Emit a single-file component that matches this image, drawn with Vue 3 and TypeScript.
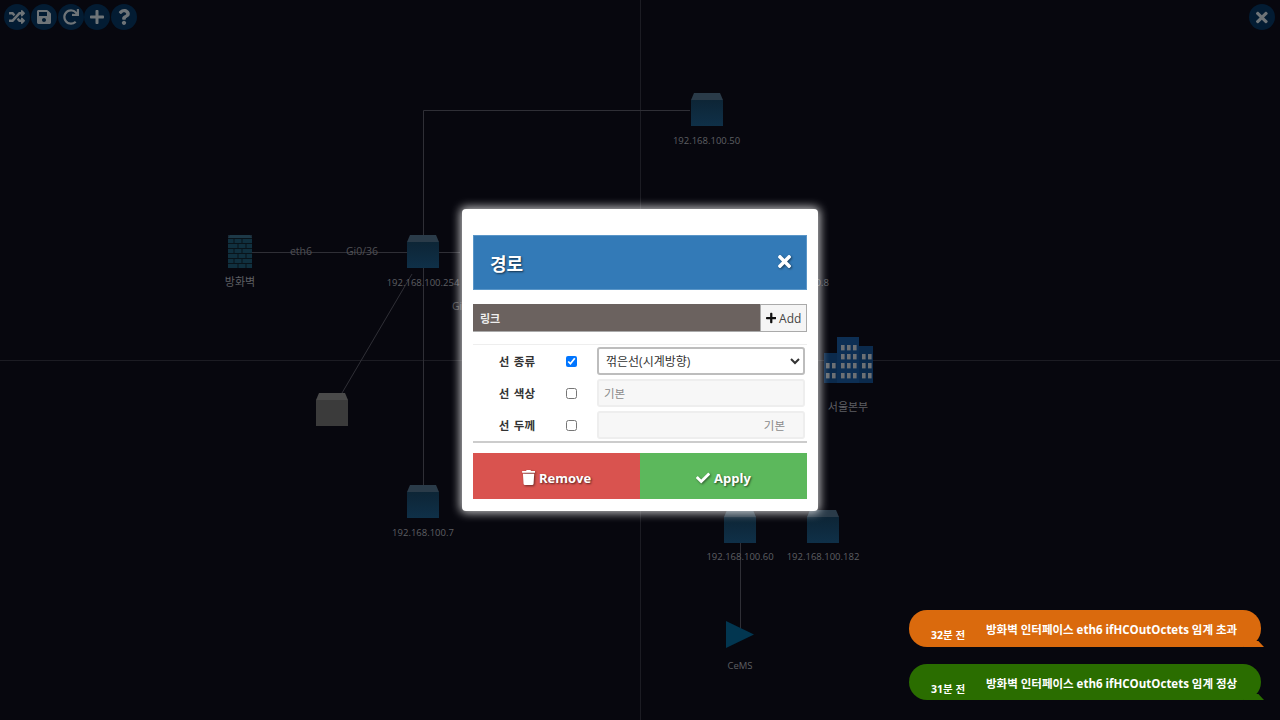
<script setup lang="ts">
interface NodeItem { label: string; x: number; y: number; kind: string; ly: number }
const nodes: NodeItem[] = [
  { label: '192.168.100.50', x: 706.5, y: 110, kind: 'cube', ly: 139.5 },
  { label: '방화벽', x: 240, y: 252, kind: 'wall', ly: 281 },
  { label: '192.168.100.254', x: 423, y: 252, kind: 'cube', ly: 281.5 },
  { label: '', x: 331.5, y: 410, kind: 'gray', ly: 0 },
  { label: '192.168.100.7', x: 423, y: 502, kind: 'cube', ly: 531.5 },
  { label: '192.168.100.60', x: 740, y: 527, kind: 'cube', ly: 555.5 },
  { label: '192.168.100.182', x: 823, y: 527, kind: 'cube', ly: 555.5 },
  { label: 'CeMS', x: 740, y: 635, kind: 'tri', ly: 664.5 },
  { label: '서울본부', x: 848, y: 360, kind: 'bld', ly: 405.5 },
  { label: '192.168.100.8', x: 798, y: 252, kind: 'none', ly: 281.5 }
]
const isKo = (s: string) => /[가-힣]/.test(s)
const tools = [
  { vb: '0 0 512 512', d: 'M504.971 359.029c9.373 9.373 9.373 24.569 0 33.941l-80 79.984c-15.01 15.01-40.971 4.49-40.971-16.971V416h-58.785a12.004 12.004 0 0 1-8.773-3.812l-70.556-75.596 53.333-57.143L352 336h32v-39.981c0-21.438 25.943-31.998 40.971-16.971l80 79.981zM12 176h84l52.781 56.551 53.333-57.143-70.556-75.596A11.999 11.999 0 0 0 122.785 96H12c-6.627 0-12 5.373-12 12v56c0 6.627 5.373 12 12 12zm372 0v39.984c0 21.46 25.961 31.98 40.971 16.971l80-79.984c9.373-9.373 9.373-24.569 0-33.941l-80-79.981C409.943 24.021 384 34.582 384 56.019V96h-58.785a12.004 12.004 0 0 0-8.773 3.812L96 336H12c-6.627 0-12 5.373-12 12v56c0 6.627 5.373 12 12 12h110.785c3.326 0 6.503-1.381 8.773-3.812L352 176h32z' },
  { vb: '0 0 448 512', d: 'M433.941 129.941l-83.882-83.882A48 48 0 0 0 316.118 32H48C21.49 32 0 53.49 0 80v352c0 26.51 21.49 48 48 48h352c26.51 0 48-21.49 48-48V163.882a48 48 0 0 0-14.059-33.941zM224 416c-35.346 0-64-28.654-64-64 0-35.346 28.654-64 64-64s64 28.654 64 64c0 35.346-28.654 64-64 64zm96-304.52V212c0 6.627-5.373 12-12 12H76c-6.627 0-12-5.373-12-12V108c0-6.627 5.373-12 12-12h228.52c3.183 0 6.235 1.264 8.485 3.515l3.48 3.48A11.996 11.996 0 0 1 320 111.48z' },
  { vb: '0 0 512 512', d: 'M500.33 0h-47.41a12 12 0 0 0-12 12.57l4 82.76A247.42 247.42 0 0 0 256 8C119.34 8 8.12 119.53 8 256.19 7.88 393.07 118.83 504 256 504a247.1 247.1 0 0 0 166.18-63.91 12 12 0 0 0 .48-17.43l-34-34a12 12 0 0 0-16.38-.55A176 176 0 1 1 402.1 157.8l-101.53-4.87a12 12 0 0 0-12.57 12v47.41a12 12 0 0 0 12 12h200.33a12 12 0 0 0 12-12V12a12 12 0 0 0-12-12z' },
  { vb: '0 0 448 512', d: 'M416 208H272V64c0-17.67-14.33-32-32-32h-32c-17.67 0-32 14.33-32 32v144H32c-17.67 0-32 14.33-32 32v32c0 17.67 14.33 32 32 32h144v144c0 17.67 14.33 32 32 32h32c17.67 0 32-14.33 32-32V304h144c17.67 0 32-14.33 32-32v-32c0-17.67-14.33-32-32-32z' },
  { vb: '0 0 384 512', d: 'M202.021 0C122.202 0 70.503 32.703 29.914 91.026c-7.363 10.58-5.093 25.086 5.178 32.874l43.138 32.709c10.373 7.865 25.132 6.026 33.253-4.148 25.049-31.381 43.63-49.449 82.757-49.449 30.764 0 68.816 19.799 68.816 49.631 0 22.552-18.617 34.134-48.993 51.164-35.423 19.86-82.299 44.576-82.299 106.405V320c0 13.255 10.745 24 24 24h72.471c13.255 0 24-10.745 24-24v-5.773c0-42.86 125.268-44.645 125.268-160.627C377.504 66.256 286.902 0 202.021 0zM192 373.459c-38.196 0-69.271 31.075-69.271 69.271 0 38.195 31.075 69.27 69.271 69.27s69.271-31.075 69.271-69.271-31.075-69.27-69.271-69.27z' }
]
const times = 'M242.72 256l100.07-100.07c12.28-12.28 12.28-32.19 0-44.48l-22.24-22.24c-12.28-12.28-32.19-12.28-44.48 0L176 189.28 75.93 89.21c-12.28-12.28-32.19-12.28-44.48 0L9.21 111.45c-12.28 12.28-12.28 32.19 0 44.48L109.28 256 9.21 356.07c-12.28 12.28-12.28 32.19 0 44.48l22.24 22.24c12.28 12.28 32.2 12.28 44.48 0L176 322.72l100.07 100.07c12.28 12.28 32.2 12.28 44.48 0l22.24-22.24c12.28-12.28 12.28-32.19 0-44.48L242.72 256z'
const plus = tools[3].d
const trash = 'M432 32H312l-9.4-18.7A24 24 0 0 0 281.1 0H166.8a23.72 23.72 0 0 0-21.4 13.3L136 32H16A16 16 0 0 0 0 48v32a16 16 0 0 0 16 16h416a16 16 0 0 0 16-16V48a16 16 0 0 0-16-16zM53.2 467a48 48 0 0 0 47.9 45h245.8a48 48 0 0 0 47.9-45L416 128H32z'
const check = 'M173.898 439.404l-166.4-166.4c-9.997-9.997-9.997-26.206 0-36.204l36.203-36.204c9.997-9.998 26.207-9.998 36.204 0L192 312.69 432.095 72.596c9.997-9.997 26.207-9.997 36.204 0l36.203 36.204c9.997 9.997 9.997 26.206 0 36.204l-294.4 294.401c-9.998 9.997-26.207 9.997-36.204-.001z'
const rows = [
  { label: '선 종류', on: true },
  { label: '선 색상', on: false },
  { label: '선 두께', on: false }
]
const toasts = [
  { time: '32분 전', msg: '방화벽 인터페이스 eth6 ifHCOutOctets 임계 초과', cls: 'orange' },
  { time: '31분 전', msg: '방화벽 인터페이스 eth6 ifHCOutOctets 임계 정상', cls: 'green' }
]
const windows: { x: number; y: number }[] = []
for (const x of [3, 9]) for (const y of [27, 37]) windows.push({ x, y })
for (const x of [18, 24, 30]) for (const y of [9, 18, 27, 37]) windows.push({ x, y })
for (const x of [39, 45]) for (const y of [18, 27, 37]) windows.push({ x, y })
</script>

<template>
  <div class="stage">
    <svg class="wires" width="1280" height="720" viewBox="0 0 1280 720">
      <path class="grid" d="M640.5 0V720M0 360.5H1280" />
      <path class="wire" d="M423.5 502V110.5H690M240 252.5H460M342 393L412 274M740.5 540V632" />
    </svg>

    <div
      v-for="n in nodes"
      :key="n.label + n.x"
      class="node"
      :style="{ left: n.x + 'px', top: n.y + 'px' }"
    >
      <svg v-if="n.kind === 'cube'" class="ico" width="34" height="34" viewBox="0 0 34 34">
        <defs>
          <linearGradient id="cubeBody" x1="0" y1="0" x2="0" y2="1">
            <stop offset="0" stop-color="#0d2536" />
            <stop offset="1" stop-color="#0f3048" />
          </linearGradient>
        </defs>
        <path d="M4 0H30L33 7H1Z" fill="#2a3b49" />
        <rect x="1" y="7" width="32" height="26" fill="url(#cubeBody)" />
      </svg>
      <svg v-else-if="n.kind === 'gray'" class="ico" width="34" height="34" viewBox="0 0 34 34">
        <path d="M4 0H30L33 7H1Z" fill="#4a4a4a" />
        <rect x="1" y="7" width="32" height="26" fill="#3b3b3b" />
      </svg>
      <svg v-else-if="n.kind === 'wall'" class="ico" width="24" height="34" viewBox="0 0 24 34">
        <path d="M2 0H22L24 3V33H0V3Z" fill="#10303f" />
        <path d="M0 0H24V3H0Z" fill="#26404f" opacity="0.6" />
        <path d="M0 3.5H24M0 8.5H24M0 13.5H24M0 18.5H24M0 23.5H24M0 28.5H24M6 4V8M14 4V8M10 9V13M18 9V13M6 14V18M14 14V18M10 19V23M18 19V23M6 24V28M14 24V28M10 29V33M18 29V33" stroke="#07090f" stroke-width="1" opacity="0.75" fill="none" />
      </svg>
      <svg v-else-if="n.kind === 'tri'" class="ico" width="28" height="28" viewBox="0 0 28 28">
        <path d="M0 0L28 13.5L0 27Z" fill="#023650" />
      </svg>
      <svg v-else-if="n.kind === 'bld'" class="ico" width="50" height="48" viewBox="0 0 50 48">
        <rect x="1" y="17" width="13" height="30" fill="#0b2a4c" />
        <rect x="14" y="1" width="22" height="46" fill="#0d2f54" />
        <rect x="36" y="10" width="14" height="37" fill="#0b2a4c" />
        <rect v-for="(w, i) in windows" :key="i" :x="w.x" :y="w.y" width="3.6" height="5.4" fill="#6c7074" />
      </svg>
      <span
        v-if="n.label"
        class="nlabel"
        :class="{ ko: isKo(n.label) }"
        :style="{ top: n.ly - n.y + 'px' }"
      >{{ n.label }}</span>
    </div>

    <span class="wl" style="left: 301px; top: 251px">eth6</span>
    <span class="wl" style="left: 362px; top: 251px">Gi0/36</span>
    <span class="wl" style="left: 465px; top: 306px">Gi0/1</span>

    <div class="toolbar">
      <button v-for="(t, i) in tools" :key="i" class="round" type="button">
        <svg height="16" :viewBox="t.vb" class="tico"><path :d="t.d" fill="currentColor" /></svg>
      </button>
    </div>
    <button class="round closeall" type="button">
      <svg height="17" viewBox="0 0 352 512" class="tico"><path :d="times" fill="currentColor" /></svg>
    </button>

    <div class="overlay">
      <div class="modal">
        <header class="mhead">
          <h2>경로</h2>
          <svg class="mclose" height="19" viewBox="0 0 352 512"><path :d="times" fill="#fff" /></svg>
        </header>
        <div class="bar">
          <span class="barlabel">링크</span>
          <button class="add" type="button">
            <svg height="12" viewBox="0 0 448 512"><path :d="plus" fill="#111" /></svg>
            Add
          </button>
        </div>
        <div class="form">
          <div v-for="(r, i) in rows" :key="r.label" class="frow">
            <span class="flabel">{{ r.label }}</span>
            <span class="fcheck"><input type="checkbox" :checked="r.on" /></span>
            <select v-if="i === 0" class="fsel">
              <option>꺾은선(시계방향)</option>
            </select>
            <input v-else class="finp" :class="{ right: i === 2 }" disabled placeholder="기본" />
          </div>
        </div>
        <div class="actions">
          <button class="act red" type="button">
            <svg height="15" viewBox="0 0 448 512"><path :d="trash" fill="#fff" /></svg>
            Remove
          </button>
          <button class="act grn" type="button">
            <svg height="14" viewBox="0 0 512 512"><path :d="check" fill="#fff" /></svg>
            Apply
          </button>
        </div>
      </div>
    </div>

    <div class="toasts">
      <div v-for="t in toasts" :key="t.time" class="toast" :class="t.cls">
        <span class="ttime">{{ t.time }}</span>
        <span class="tmsg">{{ t.msg }}</span>
      </div>
    </div>
  </div>
</template>

<style>
html, body { margin: 0; background: #07070e; }
</style>

<style scoped>
.stage {
  position: relative;
  width: 1280px;
  height: 720px;
  overflow: hidden;
  background: #07070e;
  font-family: "Open Sans", "Noto Sans CJK KR", sans-serif;
}
.wires { position: absolute; left: 0; top: 0; }
.grid { stroke: #1c1c23; stroke-width: 1; fill: none; }
.wire { stroke: #2f2f36; stroke-width: 1; fill: none; }
.node { position: absolute; width: 0; height: 0; }
.ico { position: absolute; transform: translate(-50%, -50%); display: block; }
.nlabel {
  position: absolute;
  transform: translate(-50%, -50%);
  white-space: nowrap;
  font-size: 9.5px;
  color: #5e5f63;
}
.nlabel.ko { font-size: 11px; }
.wl {
  position: absolute;
  transform: translate(-50%, -50%);
  font-size: 10.5px;
  color: #505055;
  white-space: nowrap;
}
.toolbar { position: absolute; left: 4px; top: 4px; display: flex; gap: 0.75px; }
.round {
  width: 26px;
  height: 26px;
  padding: 0;
  border: 0;
  border-radius: 50%;
  background: #031c33;
  color: #6e7478;
  display: flex;
  align-items: center;
  justify-content: center;
}
.closeall { position: absolute; left: 1249px; top: 4px; }
.tico { display: block; }
.overlay {
  position: absolute;
  inset: 0;
  display: flex;
  align-items: center;
  justify-content: center;
}
.modal {
  width: 334px;
  padding: 26px 11px 12px;
  background: #fff;
  border-radius: 4px;
  box-shadow: 0 0 10px 2px rgba(255, 255, 255, 0.75);
  display: flex;
  flex-direction: column;
}
.mhead {
  height: 55px;
  box-sizing: border-box;
  background: #337ab7;
  border: 1px solid #5a96c8;
  display: flex;
  align-items: center;
  justify-content: space-between;
  padding: 0 15px 0 16px;
}
.mhead h2 {
  margin: 0;
  font-size: 18px;
  font-weight: 700;
  color: #fff;
  text-shadow: 1px 1px 2px rgba(0, 0, 0, 0.6);
  font-family: "Noto Sans CJK KR", sans-serif;
}
.mclose { margin-bottom: 2px; filter: drop-shadow(1px 1px 1px rgba(0, 0, 0, 0.5)); }
.bar {
  margin-top: 14px;
  height: 28px;
  box-sizing: border-box;
  background: #6b625f;
  border-bottom: 1px solid #aaa;
  display: flex;
  align-items: stretch;
  justify-content: space-between;
}
.barlabel {
  align-self: center;
  margin-left: 7px;
  font-size: 11px;
  font-weight: 700;
  color: #eee;
  font-family: "Noto Sans CJK KR", sans-serif;
}
.add {
  width: 47px;
  height: 28px;
  padding: 0;
  box-sizing: border-box;
  border: 1px solid #aaa;
  background: #f5f5f5;
  font-family: inherit;
  font-size: 12px;
  color: #444;
  display: flex;
  align-items: center;
  justify-content: center;
  gap: 3px;
}
.form {
  margin-top: 12px;
  border-top: 1px solid #eee;
  border-bottom: 2px solid #ccc;
  padding: 2px 0;
  display: flex;
  flex-direction: column;
  gap: 4px;
}
.frow {
  display: grid;
  grid-template-columns: 73px 51px 208px;
  align-items: center;
  height: 28px;
}
.flabel {
  text-align: right;
  white-space: nowrap;
  margin-right: 11px;
  font-size: 11.5px;
  font-weight: 700;
  color: #333;
  word-spacing: 2px;
  font-family: "Noto Sans CJK KR", sans-serif;
}
.fcheck { display: flex; justify-content: center; }
.fcheck input { margin: 0; width: 11px; height: 11px; }
.fsel {
  width: 208px;
  height: 28px;
  box-sizing: border-box;
  border: 2px solid #bdbdbd;
  border-radius: 3px;
  background: #fff;
  padding: 0 3px;
  font-size: 12px;
  color: #333;
  font-family: "Open Sans", "Noto Sans CJK KR", sans-serif;
}
.finp {
  width: 208px;
  height: 28px;
  box-sizing: border-box;
  border: 2px solid #eeeeee;
  border-radius: 3px;
  background: #f7f7f7;
  padding: 0 5px;
  font-size: 11.5px;
  font-family: "Open Sans", "Noto Sans CJK KR", sans-serif;
}
.finp::placeholder { color: #8a8a8a; opacity: 1; }
.finp.right { text-align: right; padding-right: 18px; }
.actions { margin-top: 10px; display: flex; }
.act {
  flex: 1 1 0;
  height: 46px;
  border: 0;
  padding: 3px 0 0;
  box-sizing: border-box;
  font-family: "Open Sans", sans-serif;
  font-size: 13px;
  font-weight: 700;
  color: #fff;
  text-shadow: 1px 1px 2px rgba(0, 0, 0, 0.6);
  display: flex;
  align-items: center;
  justify-content: center;
  gap: 4px;
}
.act svg { filter: drop-shadow(1px 1px 1px rgba(0, 0, 0, 0.5)); }
.red { background: #d9534f; }
.grn { background: #5cb85c; }
.toasts {
  position: absolute;
  left: 909px;
  top: 610px;
  display: flex;
  flex-direction: column;
  gap: 17px;
}
.toast {
  position: relative;
  width: 352px;
  height: 37px;
  border-radius: 18px;
  color: #fff;
  font-weight: 700;
  font-family: "Open Sans", "Noto Sans CJK KR", sans-serif;
}
.toast::after {
  content: "";
  position: absolute;
  right: -3px;
  bottom: 0;
  width: 20px;
  height: 6px;
  background: inherit;
  clip-path: polygon(0 100%, 100% 100%, 72% 0, 0 0);
}
.orange { background: #da6a0d; }
.green { background: #2a6d00; height: 36px; }
.ttime {
  position: absolute;
  left: 22px;
  top: 17px;
  font-size: 10.5px;
  white-space: nowrap;
}
.tmsg {
  position: absolute;
  left: 77px;
  top: 11px;
  font-size: 11.5px;
  white-space: nowrap;
}
</style>
